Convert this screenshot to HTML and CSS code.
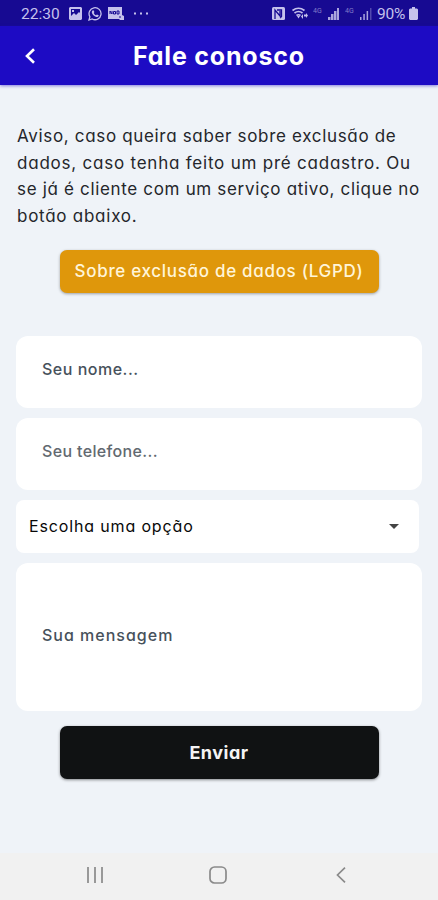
FILE: index.html
```
<!DOCTYPE html>
<html lang="pt-BR">
<head>
  <meta charset="UTF-8">
  <meta name="viewport" content="width=device-width, initial-scale=1.0">
  <title>Fale conosco</title>
  <link rel="stylesheet" href="styles.css">
</head>
<body>
  <div class="status-bar">
    <span class="clock">22:30</span>
    <svg class="icon-picture" width="13" height="13" viewBox="0 0 13 13">
      <path fill="currentColor" fill-rule="evenodd" d="M1 0h11l1 1v11l-1 1H1l-1-1V1zM2 2v7l3-3 2 2 3-3 1 1V2zM3 3h2v2H3z"/>
    </svg>
    <svg class="icon-whatsapp" width="14" height="14" viewBox="0 0 14 14">
      <path fill="none" stroke="currentColor" stroke-width="1.3" d="M1 13l.9-3.2A6 6 0 1 1 4.2 12z"/>
      <path fill="currentColor" d="M4.5 3.5l1-.3.9 1.9-.6.8c.5 1.1 1.2 1.8 2.3 2.3l.8-.8 1.8.9c0 1.4-1.2 2-2.4 1.7C6 9.400 4.300 7.700 3.800 5.500c-.1-.8.2-1.500.7-2z"/>
    </svg>
    <svg class="icon-news" width="16" height="13" viewBox="0 0 16 13">
      <path fill="currentColor" d="M0 0h14v8l2 1v4h-4l-1-1H0z"/>
      <path fill="none" stroke="#170a92" stroke-width="1" d="M2 7V4l2 3V4M5.500 7V4.500h2V7zM9 4v3h2V4zM11 10h2"/>
    </svg>
    <svg class="icon-more" width="15" height="3" viewBox="0 0 15 3">
      <path fill="currentColor" d="M0 .5h2v2H0zM6 .5h2v2H6zM12 .5h2v2h-2z"/>
    </svg>
    <div class="status-right">
      <svg width="13" height="13" viewBox="0 0 13 13">
        <rect width="13" height="13" rx="1.500" fill="currentColor"/>
        <path fill="none" stroke="#170a92" stroke-width="1.300" d="M3 12V3l5 6V4M5 3h4.500v6.500L8 11"/>
      </svg>
      <svg class="icon-wifi" width="16" height="13" viewBox="0 0 16 13">
        <path fill="none" stroke="currentColor" stroke-width="1.700" d="M.5 3.500Q6.500-1 12.500 3.500M2.500 6Q6.500 3 10.500 6M4.500 8.500Q6.500 7 8.500 8.500"/>
        <path fill="currentColor" d="M5 9h3l-1.500 2.500zM9 9.500L11 7v5zM12 7.500h2V6l2 2.500L14 11V9.500h-2z"/>
      </svg>
      <span class="network">4G</span>
      <svg class="icon-signal" width="12" height="12" viewBox="0 0 12 12">
        <path fill="currentColor" d="M0 9h2.500v3H0zM3 6h2.500v6H3zM6 3h2.500v9H6zM9 0h2v12H9z"/>
      </svg>
      <span class="network">4G</span>
      <svg class="icon-signal" width="12" height="12" viewBox="0 0 12 12">
        <path fill="currentColor" d="M0 9h1.500v3H0zM3.300 6h1.500v6H3.300zM6.600 3h1.500v9H6.600z"/>
        <path fill="currentColor" opacity=".4" d="M10 0h1.500v12H10z"/>
      </svg>
      <span class="percent">90%</span>
      <svg class="icon-battery" width="9" height="13" viewBox="0 0 9 13">
        <path fill="currentColor" d="M3 0h3v1.500h2l1 1V12l-1 1H1l-1-1V2.500l1-1h2z"/>
      </svg>
    </div>
  </div>

  <header class="header">
    <svg class="back" width="12" height="16" viewBox="0 0 12 16">
      <path fill="none" stroke="#fff" stroke-width="2.600" d="M10 1.300L3 8l7 6.700"/>
    </svg>
    <h1>Fale conosco</h1>
  </header>

  <main class="content">
    <p class="notice">
      <span class="line-1">Aviso, caso queira saber sobre exclusão de</span><br>
      <span class="line-2">dados, caso tenha feito um pré cadastro. Ou</span><br>
      <span class="line-3">se já é cliente com um serviço ativo, clique no</span><br>
      <span class="line-4">botão abaixo.</span>
    </p>
    <button type="button" class="btn btn-lgpd">Sobre exclusão de dados (LGPD)</button>

    <form class="contact-form">
      <input class="name" type="text" placeholder="Seu nome...">
      <input class="phone" type="tel" placeholder="Seu telefone...">
      <button type="button" class="select">
        <span>Escolha uma opção</span>
        <svg width="10" height="5" viewBox="0 0 10 5"><path fill="#444" d="M0 0h10L5 5z"/></svg>
      </button>
      <input class="message" type="text" placeholder="Sua mensagem">
      <button type="submit" class="btn btn-send">Enviar</button>
    </form>
  </main>

  <nav class="nav-bar">
    <svg width="16" height="16" viewBox="0 0 16 16"><path stroke="#8a8a8a" stroke-width="1.700" d="M1 0v16M8 0v16M15 0v16"/></svg>
    <svg class="nav-home" width="18" height="18" viewBox="0 0 18 18"><rect x="1" y="1" width="16" height="16" rx="4.500" fill="none" stroke="#8a8a8a" stroke-width="1.700"/></svg>
    <svg class="nav-back" width="10" height="16" viewBox="0 0 10 16"><path fill="none" stroke="#8a8a8a" stroke-width="1.700" d="M9 .7L1.500 8 9 15.300"/></svg>
  </nav>
</body>
</html>
```

FILE: styles.css
```
* { box-sizing: border-box; }
body { margin: 0; height: 900px; overflow: hidden; display: flex; flex-direction: column; background: #eff3f8; font-family: Inter, sans-serif; font-feature-settings: "cv11"; color: #24262b; }
svg { display: block; flex: none; }
button, input { font-family: inherit; font-feature-settings: inherit; border: none; outline: none; }

.status-bar { height: 26px; flex: none; display: flex; align-items: center; padding: 1px 20px 0 21px; background: #170a92; color: #c5c1ec; font-family: Roboto, sans-serif; font-size: 15.5px; }
.clock { width: 40px; margin-right: 8px; }
.icon-whatsapp { margin-left: 6px; }
.icon-news { margin-left: 6px; }
.icon-more { margin-left: 10px; }
.status-right { margin-left: auto; display: flex; align-items: center; }
.icon-wifi { margin-left: 7px; }
.network { font-size: 7px; width: 10px; margin: 0 5px 6px 5px; opacity: 0.6; }
.icon-signal { opacity: 0.85; }
.percent { width: 30px; margin: 0 2px 0 5px; letter-spacing: -0.2px; }

.header { height: 59px; flex: none; display: flex; align-items: center; padding-left: 24px; background: #1d0bc4; color: #fff; box-shadow: 0 1px 3px rgba(29,11,196,0.5); }
.header h1 { margin: 0 0 0 97px; font-size: 25px; line-height: 30px; font-weight: 650; letter-spacing: 0.8px; white-space: nowrap; }

.content { flex: 1; padding: 38px 16px 0; }
.notice { margin: 0 0 20px 1px; font-size: 17px; line-height: 26.7px; font-weight: 370; white-space: nowrap; }
.line-1, .line-3 { letter-spacing: 0.67px; }
.line-2 { letter-spacing: 0.78px; }
.line-4 { letter-spacing: 0.74px; }
.btn { display: block; width: 319px; margin: 0 auto; padding: 0; border-radius: 7px; text-align: center; white-space: nowrap; }
.btn-lgpd { height: 43px; background: #df970b; color: #fff5d8; font-size: 17px; font-weight: 550; letter-spacing: 0.69px; box-shadow: 0 1px 3px rgba(0,0,0,0.35); }

.contact-form { margin-top: 43px; }
.contact-form input { display: block; width: 100%; height: 72px; margin-bottom: 10px; padding: 0 26px 5px; border-radius: 12px; background: #fff; font-size: 16px; font-weight: 500; }
.contact-form input::placeholder { color: #46515b; opacity: 1; }
.contact-form .name { letter-spacing: 0.5px; }
.contact-form .phone { letter-spacing: 0.35px; }
.contact-form .phone::placeholder { color: #626970; }
.contact-form .message { height: 148px; margin-bottom: 15px; padding-bottom: 4px; letter-spacing: 1px; }
.select { display: flex; align-items: center; justify-content: space-between; width: 403px; height: 53px; margin-bottom: 10px; padding: 0 20px 0 13px; border-radius: 8px; background: #fff; color: #080808; font-size: 16px; letter-spacing: 0.85px; }
.btn-send { height: 53px; background: #101213; color: #f4f4f4; font-size: 18px; font-weight: 650; letter-spacing: 0.5px; box-shadow: 0 1px 3px rgba(0,0,0,0.45); }

.nav-bar { height: 47px; flex: none; display: flex; align-items: center; padding: 0 0 3px 87px; background: #f1f1f1; }
.nav-home { margin-left: 106px; }
.nav-back { margin-left: 109px; }
```
